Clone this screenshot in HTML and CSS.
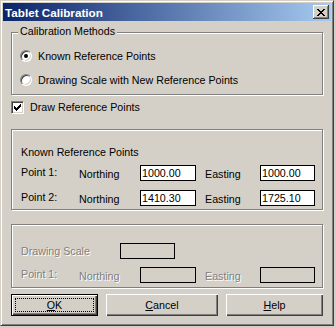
FILE: index.html
```html
<!DOCTYPE html>
<html>
<head>
<meta charset="utf-8">
<title>Tablet Calibration</title>
<link rel="stylesheet" href="styles.css">
</head>
<body>
<div class="window">
  <div class="titlebar">
    <span class="title">Tablet Calibration</span>
    <span class="close-btn">
      <svg width="8" height="7" viewBox="0 0 8 7" shape-rendering="crispEdges"><path fill="#000" d="M0 0h2v1H0zM6 0h2v1H6zM1 1h2v1H1zM5 1h2v1H5zM2 2h4v1H2zM3 3h2v1H3zM2 4h4v1H2zM1 5h2v1H1zM5 5h2v1H5zM0 6h2v1H0zM6 6h2v1H6z"/></svg>
    </span>
  </div>
  <div class="content">
    <div class="group group-methods">
      <span class="group-label">Calibration Methods</span>
      <div class="option"><span class="radio checked"></span><span>Known Reference Points</span></div>
      <div class="option"><span class="radio"></span><span>Drawing Scale with New Reference Points</span></div>
    </div>

    <div class="check-row">
      <span class="checkbox">
        <svg width="11" height="11" viewBox="0 0 11 11" shape-rendering="crispEdges"><path fill="#000" d="M8 2h1v1H8zM7 3h2v1H7zM2 4h1v1H2zM6 4h3v1H6zM2 5h2v1H2zM5 5h3v1H5zM2 6h5v1H2zM3 7h3v1H3zM4 8h1v1H4z"/></svg>
      </span>
      <span>Draw Reference Points</span>
    </div>

    <div class="group group-known">
      <div class="section-title">Known Reference Points</div>
      <div class="point-rows">
        <div class="point-row">
          <span class="lbl-point">Point 1:</span>
          <span class="lbl-axis">Northing</span>
          <input class="field" type="text" value="1000.00">
          <span class="lbl-axis lbl-easting">Easting</span>
          <input class="field" type="text" value="1000.00">
        </div>
        <div class="point-row">
          <span class="lbl-point">Point 2:</span>
          <span class="lbl-axis">Northing</span>
          <input class="field" type="text" value="1410.30">
          <span class="lbl-axis lbl-easting">Easting</span>
          <input class="field" type="text" value="1725.10">
        </div>
      </div>
    </div>

    <div class="group group-scale disabled">
      <div class="scale-row">
        <span class="lbl-scale">Drawing Scale</span>
        <input class="field field-disabled" type="text" value="" disabled>
      </div>
      <div class="point-row scale-point">
        <span class="lbl-point">Point 1:</span>
        <span class="lbl-axis">Northing</span>
        <input class="field field-disabled" type="text" value="" disabled>
        <span class="lbl-axis lbl-easting">Easting</span>
        <input class="field field-disabled" type="text" value="" disabled>
      </div>
    </div>

    <div class="buttons">
      <button class="btn btn-default btn-ok"><u>O</u>K</button>
      <button class="btn btn-cancel"><u>C</u>ancel</button>
      <button class="btn btn-help"><u>H</u>elp</button>
    </div>
  </div>
</div>
</body>
</html>
```

FILE: styles.css
```css
* {
  box-sizing: border-box;
}

html,
body {
  margin: 0;
  padding: 0;
}

body {
  width: 336px;
  height: 328px;
  overflow: hidden;
  background: #d4d0c8;
  font-family: "Liberation Sans", Arial, sans-serif;
  font-size: 10.7px;
  color: #000;
}

.window {
  width: 334px;
  height: 326px;
  background: #d4d0c8;
  border: 1px solid;
  border-color: #d4d0c8 #404040 #404040 #d4d0c8;
  box-shadow: inset 1px 1px #fff, inset -1px -1px #808080;
  padding: 2px;
}

.titlebar {
  height: 18px;
  display: flex;
  align-items: center;
  justify-content: space-between;
  padding: 0 2px;
  background: linear-gradient(to right, #0a246a, #a6caf0);
  color: #fff;
}

.title {
  font-weight: bold;
  font-size: 11.7px;
  line-height: 13px;
}

.close-btn {
  width: 16px;
  height: 14px;
  display: flex;
  align-items: center;
  justify-content: center;
  background: #d4d0c8;
  box-shadow: inset -1px -1px #404040, inset 1px 1px #fff, inset -2px -2px #808080;
}

.close-btn svg {
  display: block;
}

.content {
  padding: 11px 8px 0;
}

.group {
  position: relative;
  border: 1px solid #808080;
  box-shadow: inset 1px 1px #fff, 1px 1px #fff;
}

.group-label {
  position: absolute;
  top: -8px;
  left: 6px;
  padding: 0 2px;
  background: #d4d0c8;
  line-height: 13px;
}

.group-methods {
  height: 63px;
  padding: 15px 0 0 8px;
  display: flex;
  flex-direction: column;
  gap: 8px;
}

.option {
  height: 16px;
  display: flex;
  align-items: center;
  gap: 6px;
  line-height: 13px;
}

.radio {
  position: relative;
  flex: none;
  width: 12px;
  height: 12px;
  border-radius: 50%;
  border: 1px solid;
  border-color: #808080 #fff #fff #808080;
  box-shadow: inset 1px 1px #404040, inset -1px -1px #d4d0c8;
  background: #fff;
}

.radio.checked::after {
  content: "";
  position: absolute;
  left: 3px;
  top: 3px;
  width: 4px;
  height: 4px;
  border-radius: 50%;
  background: #000;
}

.check-row {
  margin-top: 6px;
  height: 13px;
  display: flex;
  align-items: center;
  gap: 6px;
  line-height: 13px;
}

.checkbox {
  flex: none;
  width: 13px;
  height: 13px;
  border: 1px solid;
  border-color: #808080 #fff #fff #808080;
  box-shadow: inset 1px 1px #404040, inset -1px -1px #d4d0c8;
  background: #fff;
}

.checkbox svg {
  display: block;
}

.group-known {
  margin-top: 15px;
  height: 81px;
  padding: 16px 0 0 9px;
}

.section-title {
  line-height: 13px;
}

.point-rows {
  margin-top: 6px;
  display: flex;
  flex-direction: column;
  gap: 9px;
}

.point-row {
  display: grid;
  grid-template-columns: 58px 61px 56px 64px 55px;
  height: 16px;
  align-items: start;
}

.lbl-point {
  padding-top: 1px;
  line-height: 13px;
  white-space: nowrap;
}

.lbl-axis {
  padding-top: 3px;
  line-height: 13px;
  white-space: nowrap;
}

.lbl-easting {
  padding-left: 9px;
}

.field {
  display: block;
  width: 100%;
  height: 16px;
  margin: 0;
  border: 1px solid #000;
  border-radius: 0;
  background: #fff;
  padding: 0 1px;
  font: inherit;
  line-height: 13px;
  color: #000;
  outline: none;
}

.group-scale {
  margin-top: 14px;
  height: 64px;
  padding: 18px 0 0 9px;
}

.scale-row {
  display: grid;
  grid-template-columns: 99px 55px;
  height: 16px;
  align-items: start;
}

.lbl-scale {
  padding-top: 2px;
  line-height: 13px;
}

.scale-point {
  margin-top: 8px;
}

.disabled .lbl-scale,
.disabled .lbl-point,
.disabled .lbl-axis {
  color: #808080;
  text-shadow: 1px 1px #fff;
}

.field-disabled {
  background: #d4d0c8;
}

.buttons {
  margin-top: 6px;
  display: flex;
  gap: 8px;
}

.btn {
  position: relative;
  height: 22px;
  margin: 0;
  padding: 0;
  border: 0;
  border-radius: 0;
  background: #d4d0c8;
  font: inherit;
  color: #000;
  line-height: 13px;
  box-shadow: inset 1px 1px #fff, inset -1px -1px #404040, inset -2px -2px #808080;
}

.btn u {
  text-decoration: underline;
  text-underline-offset: 1px;
}

.btn-ok {
  width: 87px;
}

.btn-cancel {
  width: 112px;
}

.btn-help {
  width: 97px;
}

.btn-default {
  border: 1px solid #000;
  box-shadow: inset 1px 1px #fff, inset -1px -1px #404040, inset -2px -2px #808080;
}

.btn-default::after {
  content: "";
  position: absolute;
  left: 3px;
  top: 3px;
  right: 3px;
  bottom: 3px;
  border: 1px dotted #000;
}
```
